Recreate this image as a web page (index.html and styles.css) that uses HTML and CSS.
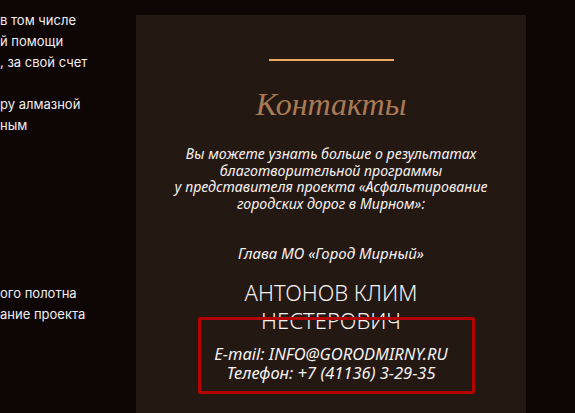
FILE: index.html
```html
<!DOCTYPE html>
<html lang="ru">
<head>
<meta charset="utf-8">
<link rel="stylesheet" href="styles.css">
</head>
<body>
<div class="page">
  <div class="side">
    <div class="side-line">в том числе</div>
    <div class="side-line">й помощи</div>
    <div class="side-line">, за свой счет</div>
    <div class="side-line">&nbsp;</div>
    <div class="side-line">ру алмазной</div>
    <div class="side-line">ным</div>
    <div class="side-gap"></div>
    <div class="side-line">ого полотна</div>
    <div class="side-line">ание проекта</div>
  </div>
  <div class="card">
    <div class="rule"></div>
    <h2 class="title">Контакты</h2>
    <p class="intro">Вы можете узнать больше о результатах<br>благотворительной программы<br>у представителя проекта «Асфальтирование<br>городских дорог в Мирном»:</p>
    <p class="role">Глава МО «Город Мирный»</p>
    <p class="name">АНТОНОВ КЛИМ<br>НЕСТЕРОВИЧ</p>
    <div class="contacts">
      <p class="contact-line">E-mail: INFO@GORODMIRNY.RU</p>
      <p class="contact-line">Телефон: +7 (41136) 3-29-35</p>
      <div class="highlight"></div>
    </div>
  </div>
</div>
</body>
</html>
```
FILE: styles.css
```css
html, body {
  margin: 0;
  padding: 0;
  background: #0e0605;
  height: 100%;
  overflow: hidden;
}
.page {
  display: flex;
  align-items: flex-start;
  height: 413px;
}
.side {
  width: 136px;
  flex: none;
  overflow: hidden;
  padding-top: 10px;
  font-family: Inter, "Noto Sans", sans-serif;
  font-size: 13px;
  line-height: 21px;
  color: #f2eeee;
  white-space: nowrap;
}
.side-gap {
  height: 147px;
}
.card {
  width: 390px;
  flex: none;
  margin-top: 15px;
  height: 398px;
  overflow: hidden;
  background: #241813;
  display: flex;
  flex-direction: column;
  align-items: center;
  text-align: center;
  color: #f6f2f0;
  font-family: "Noto Sans", sans-serif;
}
.rule {
  width: 125px;
  height: 2px;
  background: #eea866;
  margin-top: 44px;
}
.title {
  margin: 25px 0 0;
  font-family: "Liberation Serif", serif;
  font-style: italic;
  font-weight: normal;
  font-size: 32px;
  line-height: 36px;
  color: #a97b55;
}
.intro {
  margin: 24px 0 0;
  font-style: italic;
  font-size: 14.2px;
  line-height: 16.5px;
}
.role {
  margin: 32px 0 0;
  font-style: italic;
  font-size: 15px;
  line-height: 18px;
}
.name {
  margin: 16px 0 0;
  font-weight: 300;
  font-size: 22px;
  line-height: 28px;
}
.contacts {
  position: relative;
  width: 277px;
  margin-top: 10px;
}
.contact-line {
  margin: 0;
  font-style: italic;
  font-size: 16.5px;
  line-height: 19px;
}
.highlight {
  position: absolute;
  left: 5px;
  top: -27px;
  width: 271px;
  height: 71px;
  border: 3px solid #b40000;
  border-radius: 2px;
}
```
